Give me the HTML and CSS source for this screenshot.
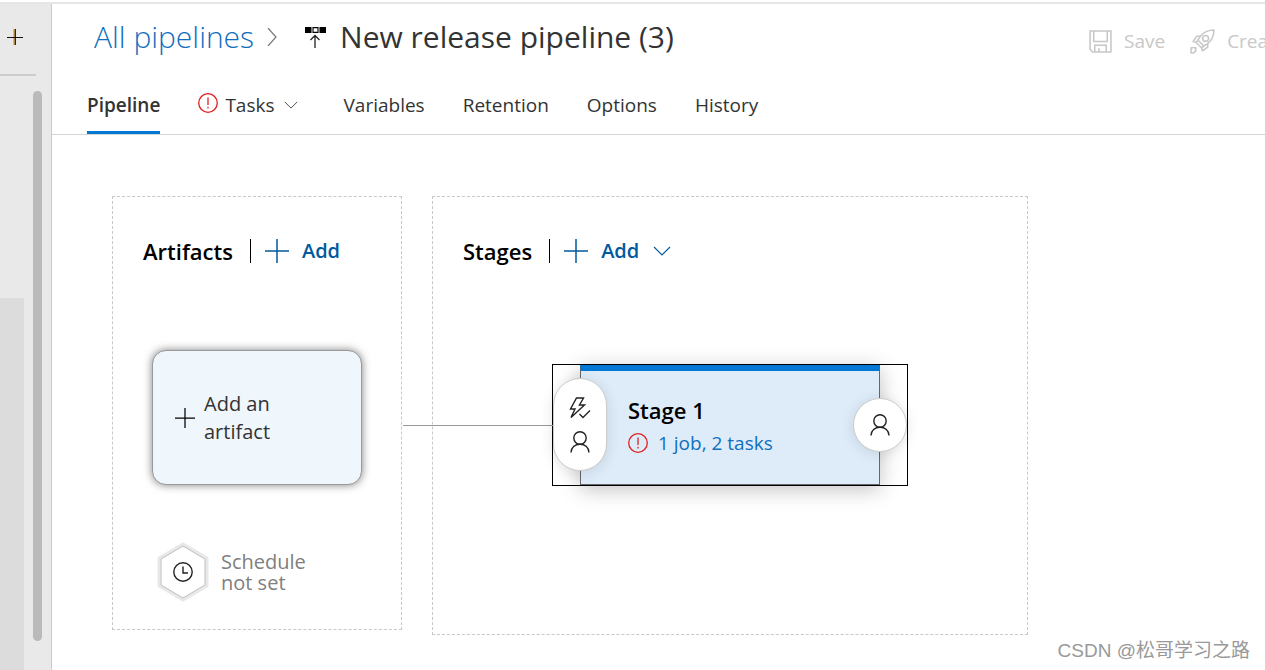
FILE: index.html
```html
<!DOCTYPE html>
<html lang="en">
<head>
<meta charset="utf-8">
<title>New release pipeline (3)</title>
<link rel="stylesheet" href="styles.css">
</head>
<body>
<svg class="defs" aria-hidden="true">
  <symbol id="plus" viewBox="0 0 24 24"><path d="M12 0v24M0 12h24" fill="none" stroke="currentColor" stroke-width="1.5"/></symbol>
  <symbol id="chevron" viewBox="0 0 18 10"><path d="M1 1l8 8 8-8" fill="none" stroke="currentColor" stroke-width="1.1"/></symbol>
  <symbol id="alert" viewBox="0 0 20 20"><circle cx="10" cy="10" r="9.3" fill="none" stroke="currentColor" stroke-width="1.3"/><path d="M10 4.5v7.5M10 13.8v1.6" stroke="currentColor" stroke-width="1.3"/></symbol>
  <symbol id="person" viewBox="0 0 20 22"><circle cx="10" cy="7" r="6.2" fill="none" stroke="currentColor" stroke-width="1.4"/><path d="M1 21.500c0-5 4-8.300 9-8.300s9 3.300 9 8.300" fill="none" stroke="currentColor" stroke-width="1.4"/></symbol>
</svg>
<div class="app">
  <aside class="sidebar">
    <button class="new-item" aria-label="New"><svg class="icon-new" viewBox="0 0 16 16"><path d="M7 0v16" stroke="#f0a010" stroke-width="1.4"/><path d="M8.300 0v16M0 8.500h16" stroke="#111" stroke-width="1.2"/></svg></button>
    <div class="side-body"><div class="side-block"></div><div class="side-scroll"></div></div>
  </aside>
  <main class="main">
    <header class="header">
      <div class="title-row">
        <nav class="crumbs">
          <a class="crumb-link" href="#">All pipelines</a>
          <svg class="crumb-sep" viewBox="0 0 10 18"><path d="M1 0l8 9-8 9" fill="none" stroke="#777" stroke-width="1.2"/></svg>
          <svg class="crumb-icon" viewBox="0 0 22 22"><path d="M0 1h6.500v6H0zM14.500 1H21v6h-6.500z" fill="#000"/><path d="M8 1.600h5v4.800H8z" fill="none" stroke="#000" stroke-width="1.100"/><path d="M10 22V9.500M5.500 14L10 9.500l4.500 4.500" fill="none" stroke="#222" stroke-width="1.300"/></svg>
          <h1 class="title">New release pipeline (3)</h1>
        </nav>
        <div class="actions">
          <button class="action" disabled><svg class="icon-save" viewBox="0 0 22 22"><g fill="none" stroke="currentColor" stroke-width="1.500"><path d="M1 1h20v20H3.500L1 18.500zM4.500 1v10h13V1M5.500 21v-6.500h11V21M9.500 21v-3.500"/></g></svg>Save</button>
          <button class="action" disabled><svg class="icon-rocket" viewBox="0 0 24 24"><g fill="none" stroke="currentColor" stroke-width="1.500" stroke-linejoin="round"><path d="M23 1c-6 0-10 2-13 6l-4 6 5 5 6-4c4-3 6-7 6-13z"/><circle cx="15" cy="9" r="2.800"/><path d="M10 7H6.500L3 12l3 1M17 14v3.500L12 21l-1-3M8 11l5 5M1 18h4.500v3L3.500 23H1z"/></g></svg>Create release</button>
        </div>
      </div>
      <nav class="tabs">
        <a class="tab active" href="#">Pipeline</a>
        <a class="tab tasks" href="#"><svg class="icon-alert raised"><use href="#alert"/></svg>Tasks<svg class="tab-chevron"><use href="#chevron"/></svg></a>
        <a class="tab" href="#">Variables</a>
        <a class="tab" href="#">Retention</a>
        <a class="tab" href="#">Options</a>
        <a class="tab" href="#">History</a>
      </nav>
    </header>
    <div class="canvas">
      <section class="panel artifacts">
        <div class="panel-head">
          <h2 class="panel-title">Artifacts</h2>
          <button class="add"><svg class="icon-add"><use href="#plus"/></svg>Add</button>
        </div>
        <button class="artifact-card"><svg class="icon-plus" viewBox="0 0 24 24"><use href="#plus"/></svg><span>Add an<br>artifact</span></button>
        <div class="schedule">
          <svg class="hexagon" viewBox="0 0 52 60"><path d="M26 2L50 16v28L26 58 2 44V16z" fill="#fff" stroke="#e8e8e8" stroke-width="3"/><path d="M26 4L48 17v26L26 56 4 43V17z" fill="none" stroke="#bbb"/><circle cx="26" cy="30" r="9.200" fill="none" stroke="#222" stroke-width="1.400"/><path d="M26 24.500V31h5" fill="none" stroke="#222" stroke-width="1.400"/></svg>
          <span>Schedule<br>not set</span>
        </div>
      </section>
      <section class="panel stages">
        <div class="panel-head">
          <h2 class="panel-title">Stages</h2>
          <button class="add"><svg class="icon-add"><use href="#plus"/></svg>Add<svg class="add-chevron"><use href="#chevron"/></svg></button>
        </div>
        <div class="stage-node">
          <div class="stage-card">
            <h3 class="stage-name">Stage 1</h3>
            <a class="stage-link" href="#"><svg class="icon-alert"><use href="#alert"/></svg>1 job, 2 tasks</a>
          </div>
          <button class="pre" aria-label="Pre-deployment conditions">
            <svg class="icon-bolt" viewBox="0 0 22 22"><path d="M7.500 1h7L10.500 8h5L2 20.500 6 12H1.500zM10.500 17l3.500 3.500 7-7" fill="none" stroke="currentColor" stroke-width="1.400"/></svg>
            <svg class="icon-person"><use href="#person"/></svg>
          </button>
          <button class="post" aria-label="Post-deployment conditions"><svg class="icon-person"><use href="#person"/></svg></button>
        </div>
      </section>
    </div>
    <div class="watermark">CSDN @松哥学习之路</div>
  </main>
</div>
</body>
</html>
```
FILE: styles.css
```css
* { box-sizing: border-box; }
body {
  margin: 0;
  padding-top: 2px;
  background: #fff;
  color: #333;
  font-family: "Open Sans", "Noto Sans", "Noto Sans CJK SC", sans-serif;
  font-size: 19px;
  overflow: hidden;
}
button { border: 0; background: none; padding: 0; color: inherit; font: inherit; }
a { color: inherit; text-decoration: none; }
h1, h2, h3 { margin: 0; }
svg { flex: none; }
.defs { position: absolute; width: 0; height: 0; }
.app { display: flex; height: 100vh; border-top: 2px solid #e6e6e6; }

.sidebar {
  flex: 0 0 52px;
  display: flex;
  flex-direction: column;
  background: #e9e9e9;
  border-right: 1px solid #ccc;
}
.new-item {
  width: 36px;
  height: 72px;
  padding: 0 0 4px 7px;
  display: flex;
  align-items: center;
  border-bottom: 2px solid #ccc;
}
.icon-new { width: 16px; height: 16px; }
.side-body { flex: 1; display: flex; justify-content: space-between; padding: 15px 9px 0 0; }
.side-block { width: 24px; margin-top: 207px; background: #dcdcdc; }
.side-scroll { width: 9px; margin-bottom: 31px; border-radius: 5px; background: #bababa; }

.main { position: relative; flex: 1; min-width: 0; }
.header { border-bottom: 1px solid #d6d6d6; }
.title-row { display: flex; justify-content: space-between; padding: 11px 0 0 42px; }
.crumbs { display: flex; align-items: center; }
.crumb-link { font-size: 30px; line-height: 44px; font-weight: 300; color: #106ebe; }
.crumb-sep { width: 10px; height: 18px; margin: 0 28px 0 13px; }
.crumb-icon { width: 22px; height: 22px; margin-right: 13px; }
.title { font-size: 30px; line-height: 44px; font-weight: 400; color: #333; }
.actions { flex: 0 1 176px; display: flex; gap: 25px; padding-top: 8px; overflow: hidden; }
.action { display: flex; align-items: center; gap: 12px; white-space: nowrap; color: #c8c8c8; line-height: 36px; height: 36px; }
.icon-save { width: 23px; height: 23px; }
.icon-rocket { width: 25px; height: 25px; }

.tabs { display: flex; gap: 38px; padding: 32px 0 0 35px; }
.tab { display: flex; align-items: center; line-height: 28px; padding-bottom: 12px; border-bottom: 3px solid transparent; }
.active { font-weight: 600; border-color: #0078d4; }
.tasks { margin-right: 6px; }
.icon-alert { width: 20px; height: 20px; color: #e02020; }
.raised { margin: 0 7px 4px 0; }
.tab-chevron { width: 18px; height: 10px; margin-left: 7px; padding: 1px 2px; }

.canvas { display: flex; align-items: flex-start; gap: 30px; padding: 61px 60px 0; }
.panel { border: 1px dashed #c8c8c8; }
.panel-head { display: flex; align-items: center; padding: 42px 30px 0; height: 66px; }
.panel-title { font-size: 22px; line-height: 24px; font-weight: 600; color: #000; padding-right: 17px; }
.add { display: flex; align-items: center; height: 24px; padding-left: 14px; border-left: 1px solid #000; color: #005a9e; font-size: 20px; line-height: 24px; font-weight: 600; }
.icon-add { width: 24px; height: 24px; margin-right: 13px; }
.add-chevron { width: 18px; height: 10px; margin-left: 14px; }

.artifact-card {
  display: flex;
  align-items: center;
  gap: 9px;
  width: 210px;
  height: 135px;
  margin: 87px 39px 57px;
  padding-left: 22px;
  border: 1px solid #999;
  border-radius: 14px;
  background: #eff6fc;
  box-shadow: 0 0 8px rgba(0, 0, 0, .5);
  line-height: 28px;
  text-align: left;
  font-size: 20px;
}
.icon-plus { width: 20px; height: 20px; color: #000; }
.schedule { display: flex; align-items: center; gap: 12px; padding: 0 44px 27px; color: #808080; font-size: 20px; line-height: 21px; }
.hexagon { width: 52px; height: 60px; }

.stage-node {
  position: relative;
  width: 356px;
  margin: 101px 119px 148px;
  border: 1px solid #000;
}
.stage-node::before {
  content: "";
  position: absolute;
  right: 100%;
  top: 60px;
  width: 150px;
  height: 1px;
  background: #999;
}
.stage-card {
  height: 120px;
  margin: 0 27px;
  padding: 24px 0 0 47px;
  border: 1px solid #666;
  border-top: 6px solid #0078d4;
  background: #deecf9;
  box-shadow: 0 4px 20px rgba(0, 0, 0, .25);
}
.stage-name { font-size: 22px; line-height: 30px; font-weight: 600; color: #000; }
.stage-link { display: flex; align-items: center; gap: 10px; line-height: 36px; color: #106ebe; }
.pre, .post {
  position: absolute;
  display: flex;
  flex-direction: column;
  align-items: center;
  justify-content: center;
  gap: 12px;
  width: 54px;
  border: 1px solid #ccc;
  border-radius: 27px;
  background: #fff;
  color: #222;
  box-shadow: 0 2px 14px rgba(0, 0, 0, .12);
}
.pre { left: 0; top: 13px; height: 93px; }
.post { right: 0; top: 33px; height: 54px; }
.icon-bolt { width: 22px; height: 22px; }
.icon-person { width: 20px; height: 22px; }

.watermark {
  position: absolute;
  right: 15px;
  bottom: 9px;
  font-family: "Liberation Sans", "Noto Sans CJK SC", sans-serif;
  font-size: 19px;
  line-height: 24px;
  color: #999;
}
```
